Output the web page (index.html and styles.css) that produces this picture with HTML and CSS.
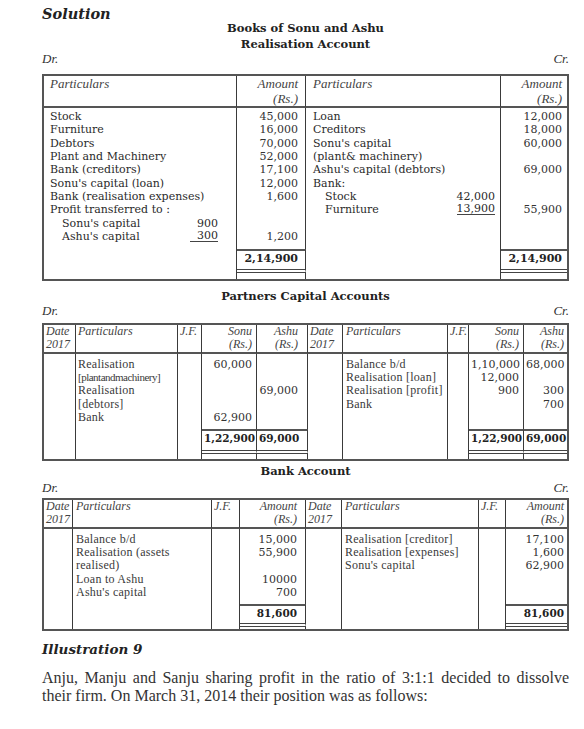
FILE: index.html
```html
<!DOCTYPE html>
<html lang="en">
<head>
    <meta charset="UTF-8">
    <title>Dissolution of Partnership Firm - Solution</title>
    <link rel="stylesheet" href="styles.css">
</head>
<body>
<div class="page">

    <h1 class="solution">Solution</h1>

    <!-- Realisation Account -->
    <div class="acc-title first">Books of Sonu and Ashu<br>Realisation Account</div>
    <div class="drcr"><span>Dr.</span><span>Cr.</span></div>

    <table class="ledger real">
        <colgroup><col><col><col><col></colgroup>
        <thead>
            <tr>
                <th>Particulars</th>
                <th class="amt">Amount<br>(Rs.)</th>
                <th>Particulars</th>
                <th class="amt">Amount<br>(Rs.)</th>
            </tr>
        </thead>
        <tbody>
            <tr class="body">
                <td class="part">
                    <div class="ln">Stock</div>
                    <div class="ln">Furniture</div>
                    <div class="ln">Debtors</div>
                    <div class="ln">Plant and Machinery</div>
                    <div class="ln">Bank (creditors)</div>
                    <div class="ln">Sonu's capital (loan)</div>
                    <div class="ln">Bank (realisation expenses)</div>
                    <div class="ln">Profit transferred to :</div>
                    <div class="ln ind"><span>Sonu's capital</span><span class="sub">900</span></div>
                    <div class="ln ind"><span>Ashu's capital</span><span class="sub ul">300</span></div>
                </td>
                <td class="num">
                    <div class="ln">45,000</div>
                    <div class="ln">16,000</div>
                    <div class="ln">70,000</div>
                    <div class="ln">52,000</div>
                    <div class="ln">17,100</div>
                    <div class="ln">12,000</div>
                    <div class="ln">1,600</div>
                    <div class="ln"></div>
                    <div class="ln"></div>
                    <div class="ln">1,200</div>
                </td>
                <td class="part right-side">
                    <div class="ln">Loan</div>
                    <div class="ln">Creditors</div>
                    <div class="ln">Sonu's capital</div>
                    <div class="ln">(plant&amp; machinery)</div>
                    <div class="ln">Ashu's capital (debtors)</div>
                    <div class="ln">Bank:</div>
                    <div class="ln ind"><span>Stock</span><span class="sub">42,000</span></div>
                    <div class="ln ind"><span>Furniture</span><span class="sub ul">13,900</span></div>
                </td>
                <td class="num">
                    <div class="ln">12,000</div>
                    <div class="ln">18,000</div>
                    <div class="ln">60,000</div>
                    <div class="ln"></div>
                    <div class="ln">69,000</div>
                    <div class="ln"></div>
                    <div class="ln"></div>
                    <div class="ln">55,900</div>
                </td>
            </tr>
            <tr class="total">
                <td></td>
                <td class="tot">2,14,900</td>
                <td></td>
                <td class="tot">2,14,900</td>
            </tr>
            <tr class="gap"><td></td><td></td><td></td><td></td></tr>
        </tbody>
    </table>

    <!-- Partners Capital Accounts -->
    <div class="acc-title">Partners Capital Accounts</div>
    <div class="drcr"><span>Dr.</span><span>Cr.</span></div>

    <table class="ledger cap">
        <colgroup><col><col><col><col><col><col><col><col><col><col></colgroup>
        <thead>
            <tr>
                <th>Date<br>2017</th>
                <th>Particulars</th>
                <th>J.F.</th>
                <th class="amt">Sonu<br>(Rs.)</th>
                <th class="amt">Ashu<br>(Rs.)</th>
                <th>Date<br>2017</th>
                <th>Particulars</th>
                <th>J.F.</th>
                <th class="amt">Sonu<br>(Rs.)</th>
                <th class="amt">Ashu<br>(Rs.)</th>
            </tr>
        </thead>
        <tbody>
            <tr class="body">
                <td></td>
                <td class="part">
                    <div class="ln">Realisation</div>
                    <div class="ln squeeze">[plantandmachinery]</div>
                    <div class="ln">Realisation</div>
                    <div class="ln">[debtors]</div>
                    <div class="ln">Bank</div>
                </td>
                <td></td>
                <td class="num">
                    <div class="ln">60,000</div>
                    <div class="ln"></div>
                    <div class="ln"></div>
                    <div class="ln"></div>
                    <div class="ln">62,900</div>
                </td>
                <td class="num">
                    <div class="ln"></div>
                    <div class="ln"></div>
                    <div class="ln">69,000</div>
                </td>
                <td></td>
                <td class="part">
                    <div class="ln">Balance b/d</div>
                    <div class="ln">Realisation [loan]</div>
                    <div class="ln">Realisation [profit]</div>
                    <div class="ln">Bank</div>
                </td>
                <td></td>
                <td class="num">
                    <div class="ln">1,10,000</div>
                    <div class="ln">12,000</div>
                    <div class="ln">900</div>
                </td>
                <td class="num">
                    <div class="ln">68,000</div>
                    <div class="ln"></div>
                    <div class="ln">300</div>
                    <div class="ln">700</div>
                </td>
            </tr>
            <tr class="total">
                <td></td><td></td><td></td>
                <td class="tot">1,22,900</td>
                <td class="tot">69,000</td>
                <td></td><td></td><td></td>
                <td class="tot">1,22,900</td>
                <td class="tot">69,000</td>
            </tr>
            <tr class="gap"><td></td><td></td><td></td><td></td><td></td><td></td><td></td><td></td><td></td><td></td></tr>
        </tbody>
    </table>

    <!-- Bank Account -->
    <div class="acc-title bank-title">Bank Account</div>
    <div class="drcr"><span>Dr.</span><span>Cr.</span></div>

    <table class="ledger bank">
        <colgroup><col><col><col><col><col><col><col><col></colgroup>
        <thead>
            <tr>
                <th>Date<br>2017</th>
                <th>Particulars</th>
                <th>J.F.</th>
                <th class="amt">Amount<br>(Rs.)</th>
                <th>Date<br>2017</th>
                <th>Particulars</th>
                <th>J.F.</th>
                <th class="amt">Amount<br>(Rs.)</th>
            </tr>
        </thead>
        <tbody>
            <tr class="body">
                <td></td>
                <td class="part">
                    <div class="ln">Balance b/d</div>
                    <div class="ln">Realisation (assets</div>
                    <div class="ln">realised)</div>
                    <div class="ln">Loan to Ashu</div>
                    <div class="ln">Ashu's capital</div>
                </td>
                <td></td>
                <td class="num">
                    <div class="ln">15,000</div>
                    <div class="ln">55,900</div>
                    <div class="ln"></div>
                    <div class="ln">10000</div>
                    <div class="ln">700</div>
                </td>
                <td></td>
                <td class="part">
                    <div class="ln">Realisation [creditor]</div>
                    <div class="ln">Realisation [expenses]</div>
                    <div class="ln">Sonu's capital</div>
                </td>
                <td></td>
                <td class="num">
                    <div class="ln">17,100</div>
                    <div class="ln">1,600</div>
                    <div class="ln">62,900</div>
                </td>
            </tr>
            <tr class="total">
                <td></td><td></td><td></td>
                <td class="tot">81,600</td>
                <td></td><td></td><td></td>
                <td class="tot">81,600</td>
            </tr>
            <tr class="gap"><td></td><td></td><td></td><td></td><td></td><td></td><td></td><td></td></tr>
        </tbody>
    </table>

    <h2 class="illustration">Illustration 9</h2>
    <div class="para">
        <div class="para-line full">Anju, Manju and Sanju sharing profit in the ratio of 3:1:1 decided to dissolve</div>
        <div class="para-line">their firm. On March 31, 2014 their position was as follows:</div>
    </div>

</div>
</body>
</html>
```

FILE: styles.css
```css
* {
    box-sizing: border-box;
    margin: 0;
    padding: 0;
}

body {
    background: #fff;
    color: #2e2e2e;
    font-family: 'DejaVu Serif', serif;
}

.page {
    width: 584px;
    padding: 6px 15px 0 42px;
}

.solution {
    font: bold italic 14.5px/16px 'DejaVu Serif', serif;
    color: #222;
}

/* Account headings */
.acc-title {
    text-align: center;
    font: bold 11.5px/16px 'DejaVu Serif', serif;
    color: #222;
    margin-top: 7px;
}

.acc-title.first {
    margin-top: -2px;
}

.acc-title.bank-title {
    margin-top: 2.5px;
    margin-bottom: 1.5px;
}

.drcr {
    display: flex;
    justify-content: space-between;
    font: italic 13px/14px 'Liberation Serif', serif;
    color: #333;
}

/* Ledger tables */
.ledger {
    width: 527px;
    border-collapse: separate;
    border-spacing: 0;
    table-layout: fixed;
    border: 2px solid #555;
    margin-top: 5px;
}

.ledger th,
.ledger td {
    border-right: 1px solid #3a3a3a;
    vertical-align: top;
    padding: 0 0 0 2px;
}

.ledger th:last-child,
.ledger td:last-child {
    border-right: none;
}

.ledger thead th {
    border-bottom: 2px solid #555;
    font: italic 12px/13.3px 'Liberation Serif', serif;
    font-weight: normal;
    color: #444;
    text-align: left;
}

.ledger thead tr {
    height: 29px;
}

.ledger th.amt {
    text-align: right;
    padding-right: 4px;
}

.ln {
    height: 13.35px;
    line-height: 13.35px;
    white-space: nowrap;
}

.ledger td.part {
    font: 12px 'Liberation Serif', serif;
    letter-spacing: 0.25px;
    color: #3a3a3a;
    padding-top: 3.5px;
}

.ledger td.num {
    font: 11px 'DejaVu Serif', serif;
    color: #333;
    text-align: right;
    padding-right: 4px;
    padding-top: 3.5px;
}

.ledger .body {
    height: 75px;
}

.ledger .total {
    height: 24.5px;
}

.ledger td.tot {
    border-top: 2px solid #555;
    border-bottom: 4px double #444;
    font: bold 10.5px/15px 'DejaVu Serif', serif;
    color: #222;
    text-align: right;
    padding-right: 4px;
}

.ledger .gap {
    height: 5px;
}

.squeeze {
    font-size: 11px;
    letter-spacing: -0.5px;
}

/* Realisation account */
.real {
    margin-top: 8px;
}

.real col:nth-child(1) { width: 193px; }
.real col:nth-child(2) { width: 69px; }
.real col:nth-child(3) { width: 195px; }
.real col:nth-child(4) { width: 66px; }

.real thead tr {
    height: 32px;
}

.real thead th {
    font-size: 13px;
    line-height: 15px;
    padding-left: 6px;
}

.real th.amt {
    padding-right: 7px;
}

.real th:nth-child(3) {
    padding-left: 7px;
}

.real .body {
    height: 141px;
}

.real td.part {
    font: 11px 'DejaVu Serif', serif;
    letter-spacing: 0;
    color: #2a2a2a;
    padding: 2px 0 0 6px;
}

.real td.right-side {
    padding-left: 7px;
}

.real td.num {
    padding: 2px 7px 0 0;
}

.real td:last-child.num,
.real th:last-child.amt {
    padding-right: 5px;
}

.real .total {
    height: 24px;
}

.real .gap {
    height: 6px;
}

.real td.tot {
    font-size: 11px;
    line-height: 16px;
    padding-right: 7px;
}

.real td:last-child.tot {
    padding-right: 5px;
}

.ln.ind {
    display: flex;
    padding-left: 12px;
}

.sub {
    margin-left: auto;
    margin-right: 18px;
}

.right-side .sub {
    margin-right: 5px;
}

.sub.ul {
    padding-left: 7px;
    border-bottom: 1px solid #444;
    height: 12px;
    line-height: 12px;
}

.right-side .sub.ul {
    padding-left: 0;
}

/* Partners capital accounts */
.cap col:nth-child(1) { width: 32px; }
.cap col:nth-child(2) { width: 102px; }
.cap col:nth-child(3) { width: 24px; }
.cap col:nth-child(4) { width: 55px; }
.cap col:nth-child(5) { width: 51px; }
.cap col:nth-child(6) { width: 35px; }
.cap col:nth-child(7) { width: 105px; }
.cap col:nth-child(8) { width: 21px; }
.cap col:nth-child(9) { width: 55px; }
.cap col:nth-child(10) { width: 43px; }

.cap th:nth-child(5),
.cap td:nth-child(5) {
    padding-right: 9px;
}

.cap th:nth-child(7),
.cap td:nth-child(7) {
    padding-left: 3px;
}

.cap th:last-child,
.cap td:last-child {
    padding-right: 3px;
}

/* Bank account */
.bank {
    margin-top: 3px;
}

.bank col:nth-child(1) { width: 29px; }
.bank col:nth-child(2) { width: 139px; }
.bank col:nth-child(3) { width: 28px; }
.bank col:nth-child(4) { width: 66px; }
.bank col:nth-child(5) { width: 36px; }
.bank col:nth-child(6) { width: 137px; }
.bank col:nth-child(7) { width: 27px; }
.bank col:nth-child(8) { width: 61px; }

.bank td.part,
.bank th:nth-child(2),
.bank th:nth-child(6) {
    padding-left: 3px;
}

.bank td.part,
.bank td.num {
    padding-top: 4px;
}

.bank th:nth-child(4),
.bank td:nth-child(4) {
    padding-right: 8px;
}

.bank th:last-child,
.bank td:last-child {
    padding-right: 3px;
}

.bank .body {
    height: 75.5px;
}

.bank .total {
    height: 23px;
}

.bank .gap {
    height: 2px;
}

/* Illustration */
.illustration {
    font: bold italic 13.5px/18px 'DejaVu Serif', serif;
    color: #222;
    margin-top: 9px;
}

.para {
    margin-top: 11px;
    font: 16px/18px 'Liberation Serif', serif;
    color: #333;
}

.para-line.full {
    text-align: justify;
    text-align-last: justify;
}
```
